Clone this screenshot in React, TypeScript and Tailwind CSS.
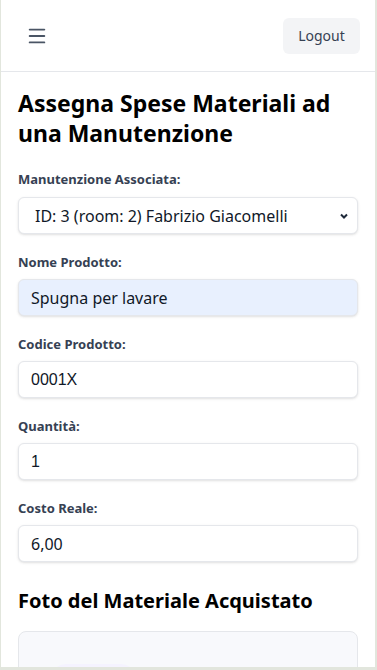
import { Menu } from "lucide-react";

const font = { fontFamily: '"Noto Sans", "Open Sans", sans-serif' };

interface FieldProps {
  label: string;
  value: string;
  mono?: boolean;
  autofill?: boolean;
}

function Field({ label, value, mono, autofill }: FieldProps) {
  return (
    <div className="mb-[19px]">
      <label className="block text-[13px] font-bold text-gray-700 leading-[18px] mb-[8px]">
        {label}
      </label>
      <input
        readOnly
        value={value}
        className={`w-full h-[37px] px-3 rounded-md border border-gray-200 shadow-sm text-[16px] text-gray-900 outline-none ${
          autofill ? "bg-[#e8f0fe]" : "bg-white"
        } ${mono ? "font-['Liberation_Sans',sans-serif]" : ""}`}
      />
    </div>
  );
}

export default function App() {
  return (
    <div className="min-h-screen bg-[#e2e6dd] pl-px pr-[2px]" style={font}>
      <div className="bg-white h-[667px] overflow-hidden">
        {/* Header */}
        <header className="h-[72px] flex items-center justify-between pl-[18px] pr-[15px] border-b border-gray-200">
          <button className="w-[36px] h-[36px] flex items-center justify-center text-gray-600">
            <Menu size={22} strokeWidth={2} />
          </button>
          <button className="h-[36px] w-[77px] rounded-md bg-gray-100 text-[14px] text-gray-700">
            Logout
          </button>
        </header>

        <main className="px-[17px] pt-[16px]">
          <h1 className="text-[23px] font-bold leading-[30px] text-black mb-[22px]">
            Assegna Spese Materiali ad una Manutenzione
          </h1>

          <div className="mb-[19px]">
            <label className="block text-[13px] font-bold text-gray-700 leading-[18px] mb-[9px]">
              Manutenzione Associata:
            </label>
            <div className="relative">
              <select
                defaultValue="3"
                className="w-full h-[37px] pl-[16px] pr-8 rounded-md border border-gray-200 bg-white shadow-sm text-[16px] text-gray-900 appearance-none outline-none"
              >
                <option value="3">ID: 3 (room: 2) Fabrizio Giacomelli</option>
              </select>
              <svg
                className="absolute right-[9px] top-1/2 -translate-y-1/2 w-[10px] h-[10px] text-gray-800 pointer-events-none"
                viewBox="0 0 10 10"
                fill="none"
                stroke="currentColor"
                strokeWidth="2"
              >
                <path d="M2 3.5l3 3 3-3" />
              </svg>
            </div>
          </div>

          <Field label="Nome Prodotto:" value="Spugna per lavare" autofill />
          <Field label="Codice Prodotto:" value="0001X" mono />
          <Field label="Quantità:" value="1" mono />
          <Field label="Costo Reale:" value="6,00" />

          <h2 className="text-[20px] font-bold leading-[28px] text-black mt-[25px] mb-[16px]">
            Foto del Materiale Acquistato
          </h2>

          <div className="h-[120px] rounded-lg border border-gray-200 bg-[#f8f9fc] px-[32px] pt-[32px]">
            <div className="w-[85px] h-[30px] rounded-full bg-violet-50" />
          </div>
        </main>
      </div>
    </div>
  );
}
